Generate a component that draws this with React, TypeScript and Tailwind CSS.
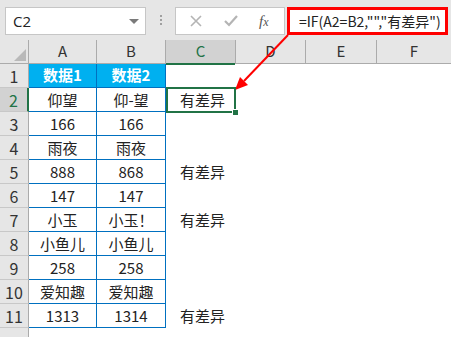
import React from "react";

const rows: [string, string, string][] = [
  ["数据1", "数据2", ""],
  ["仰望", "仰-望", "有差异"],
  ["166", "166", ""],
  ["雨夜", "雨夜", ""],
  ["888", "868", "有差异"],
  ["147", "147", ""],
  ["小玉", "小玉！", "有差异"],
  ["小鱼儿", "小鱼儿", ""],
  ["258", "258", ""],
  ["爱知趣", "爱知趣", ""],
  ["1313", "1314", "有差异"],
];

const font = { fontFamily: '"Noto Sans CJK SC", "Noto Sans", sans-serif' };

export default function App() {
  return (
    <div className="relative w-[451px] h-[337px] overflow-hidden bg-[#e6e6e6] text-[#222]" style={font}>
      {/* Formula bar */}
      <div className="flex items-start h-[40px] pt-[7px]">
        <div className="ml-[5px] w-[141px] h-[28px] bg-white border border-[#c6c6c6] flex items-center justify-between pl-[7px] pr-[6px]">
          <span className="text-[15px] text-[#222]" style={{ fontFamily: '"Open Sans", sans-serif' }}>C2</span>
          <span className="w-0 h-0 border-l-[5px] border-r-[5px] border-t-[5px] border-l-transparent border-r-transparent border-t-[#7a7a7a]" />
        </div>
        <div className="ml-[14px] mt-[8px] flex flex-col gap-[2px]">
          <span className="w-[2px] h-[2px] bg-[#a0a0a0]" />
          <span className="w-[2px] h-[2px] bg-[#a0a0a0]" />
          <span className="w-[2px] h-[2px] bg-[#a0a0a0]" />
        </div>
        <div className="ml-[13px] w-[110px] h-[28px] bg-white border border-[#c6c6c6] flex items-center">
          <svg width="12" height="12" viewBox="0 0 12 12" className="ml-[14px]">
            <path d="M1 1 L11 11 M11 1 L1 11" stroke="#b4b4b4" strokeWidth="1.6" />
          </svg>
          <svg width="14" height="12" viewBox="0 0 14 12" className="ml-[22px]">
            <path d="M1 6 L5 10 L13 1" stroke="#b4b4b4" strokeWidth="2.2" fill="none" />
          </svg>
          <span className="ml-[21px] text-[15px] italic text-[#555]" style={{ fontFamily: '"Liberation Serif", serif' }}>
            f<span className="text-[12px]">x</span>
          </span>
        </div>
        <div className="ml-[2px] w-[161px] h-[28px] bg-white border-[3px] border-[#ff0000] flex items-center pl-[9px]">
          <span className="text-[14px] text-[#222] whitespace-nowrap">=IF(A2=B2,"","有差异")</span>
        </div>
      </div>

      {/* Column headers */}
      <div className="flex h-[24px] border-b border-[#ababab]">
        <div className="w-[29px] shrink-0 border-r border-[#ababab] flex items-end justify-end pb-[2px] pr-[2px]">
          <span className="w-0 h-0" style={{ borderBottom: "12px solid #b9b9b9", borderLeft: "12px solid transparent" }} />
        </div>
        <div className="w-[68px] shrink-0 border-r border-[#ababab] flex items-end justify-center pb-[1px] text-[15px] text-[#333]">A</div>
        <div className="w-[69px] shrink-0 border-r border-[#ababab] flex items-end justify-center pb-[1px] text-[15px] text-[#333]">B</div>
        <div className="w-[70px] shrink-0 border-r border-[#ababab] flex flex-col">
          <div className="h-[7px]" />
          <div className="flex-1 bg-[#d2d2d2] border-b-2 border-[#217346] flex items-center justify-center text-[15px] text-[#217346] -mb-[1px]">C</div>
        </div>
        <div className="w-[70px] shrink-0 border-r border-[#ababab] flex items-end justify-center pb-[1px] text-[15px] text-[#333]">D</div>
        <div className="w-[71px] shrink-0 border-r border-[#ababab] flex items-end justify-center pb-[1px] text-[15px] text-[#333]">E</div>
        <div className="flex-1 flex items-end justify-center pb-[1px] text-[15px] text-[#333]">F</div>
      </div>

      {/* Rows */}
      <div className="bg-white">
        {rows.map((r, i) => {
          const n = i + 1;
          const head = i === 0;
          const sel = n === 2;
          return (
            <div key={n} className="flex h-[24px]">
              <div
                className={
                  sel
                    ? "w-[29px] shrink-0 bg-[#d2d2d2] border-r-2 border-[#217346] border-b border-b-[#c8c8c8] flex items-center justify-center text-[16px] text-[#217346]"
                    : "w-[29px] shrink-0 bg-[#e6e6e6] border-r border-[#ababab] border-b border-b-[#c8c8c8] flex items-center justify-center text-[16px] text-[#333]"
                }
              >
                {n}
              </div>
              <div
                className={
                  head
                    ? "w-[68px] shrink-0 bg-[#00b0f0] border-r border-b border-[#0070c0] flex items-center justify-center text-[15px] font-bold text-white"
                    : "w-[68px] shrink-0 border-r border-b border-[#0070c0] flex items-center justify-center text-[15px] pt-[1px]"
                }
              >
                {r[0]}
              </div>
              <div
                className={
                  head
                    ? "w-[69px] shrink-0 bg-[#00b0f0] border-r border-b border-[#0070c0] flex items-center justify-center text-[15px] font-bold text-white"
                    : "w-[69px] shrink-0 border-r border-b border-[#0070c0] flex items-center justify-center text-[15px] pt-[1px]"
                }
              >
                {r[1]}
              </div>
              <div
                className={
                  sel
                    ? "relative w-[70px] shrink-0 border-2 border-[#217346] -mt-[1px] h-[26px] -mb-[1px] flex items-center pl-[12px] text-[15px] z-10"
                    : "w-[70px] shrink-0 flex items-center pl-[14px] text-[15px] pt-[1px]"
                }
              >
                {r[2]}
                {sel && (
                  <span className="absolute -right-[5px] -bottom-[5px] w-[7px] h-[7px] bg-[#217346] border border-white" />
                )}
              </div>
              <div className="flex-1" />
            </div>
          );
        })}
        <div className="flex h-[20px]">
          <div className="w-[29px] shrink-0 bg-[#e6e6e6] border-r border-[#ababab]" />
          <div className="flex-1" />
        </div>
      </div>

      {/* Red annotation arrow */}
      <svg className="absolute left-0 top-0 pointer-events-none" width="451" height="337" viewBox="0 0 451 337">
        <line x1="288" y1="35" x2="244" y2="81" stroke="#ff0000" strokeWidth="2" />
        <polygon points="235,90 240,77 248,85" fill="#ff0000" />
      </svg>
    </div>
  );
}
